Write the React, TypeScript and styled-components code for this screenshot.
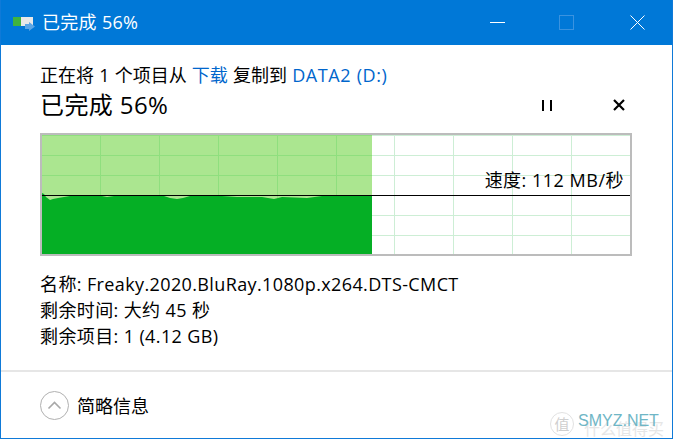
import { FC } from 'react';
import styled, { createGlobalStyle } from 'styled-components';

const FONT = '"Open Sans", "Noto Sans CJK SC", sans-serif';

const GlobalStyle = createGlobalStyle`
  html, body {
    margin: 0;
    padding: 0;
    background: #fff;
  }
`;

const Window = styled.div`
  position: relative;
  width: 673px;
  height: 439px;
  box-sizing: border-box;
  border-left: 1px solid #0f7ad8;
  border-right: 1px solid #0f7ad8;
  border-bottom: 1px solid #0f7ad8;
  display: flex;
  flex-direction: column;
  font-family: ${FONT};
  color: #000;
  overflow: hidden;
`;

const TitleBar = styled.div`
  height: 45px;
  margin: 0 -1px;
  flex: none;
  background: #0078d7;
  color: #fff;
  display: flex;
  align-items: center;
  padding: 0 13px 0 13px;
  font-size: 18px;
  line-height: 45px;
`;

const TitleText = styled.span`
  margin-left: 7px;
  flex: 1;
  letter-spacing: 0.3px;
  white-space: pre;
`;

const WinButton = styled.div<{ $gap: number }>`
  width: 46px;
  height: 45px;
  margin-left: ${(props) => props.$gap}px;
  display: flex;
  align-items: center;
  justify-content: center;
`;

const Body = styled.div`
  flex: 1;
  padding: 17px 40px 0 39px;
  display: flex;
  flex-direction: column;
`;

const CopyLine = styled.div`
  font-size: 18px;
  line-height: 26px;
  height: 26px;
  word-spacing: 0.5px;
  white-space: pre;
`;

const Link = styled.span<{ $latin?: boolean }>`
  color: #0066cc;
  letter-spacing: ${(props) => (props.$latin ? '0.55px' : '0')};
`;

const StatusRow = styled.div`
  display: flex;
  align-items: center;
  height: 34px;
  margin-bottom: 11px;
`;

const StatusText = styled.div`
  flex: 1;
  font-size: 24px;
  line-height: 34px;
  letter-spacing: 0.4px;
  white-space: pre;
`;

const ControlButton = styled.div<{ $gap: number }>`
  width: 14px;
  height: 14px;
  margin-right: ${(props) => props.$gap}px;
  display: flex;
  align-items: center;
  justify-content: center;
`;

const Chart = styled.div`
  position: relative;
  width: 592px;
  height: 123px;
  box-sizing: border-box;
  border: 2px solid #bcbcbc;
  background-color: #fff;
  background-image:
    linear-gradient(to right, #cdeed5 1px, transparent 1px),
    linear-gradient(to bottom, #cdeed5 1px, transparent 1px);
  background-size: 59px 100%, 100% 20px;
  background-position: 57px 0, 0 0;
  overflow: hidden;
`;

const Transferred = styled.div`
  position: absolute;
  left: 0;
  top: 0;
  bottom: 0;
  background-color: #abe690;
  background-image:
    linear-gradient(to right, #8fdf7e 1px, transparent 1px),
    linear-gradient(to bottom, #8fdf7e 1px, transparent 1px);
  background-size: 59px 100%, 100% 20px;
  background-position: 58px 0, 0 0;
`;

const Wave = styled.svg`
  position: absolute;
  left: 0;
  top: 0;
  display: block;
`;

const SpeedLine = styled.div`
  position: absolute;
  left: 0;
  right: 0;
  top: 60px;
  height: 1px;
  background: #000;
`;

const SpeedLabel = styled.div`
  position: absolute;
  right: 6px;
  top: 32px;
  font-size: 18px;
  line-height: 26px;
  letter-spacing: 0.5px;
  white-space: pre;
`;

const Details = styled.div`
  margin-top: 15px;
  display: flex;
  flex-direction: column;
`;

const DetailRow = styled.div`
  font-size: 18px;
  line-height: 26px;
  height: 26px;
  letter-spacing: 0.38px;
  white-space: pre;
`;

const Footer = styled.div`
  height: 68px;
  flex: none;
  border-top: 2px solid #e6e6e6;
  display: flex;
  align-items: center;
  padding-left: 39px;
  box-sizing: border-box;
  gap: 8px;
  font-size: 18px;
`;

const Watermark = styled.div`
  position: absolute;
  left: 549px;
  top: 411px;
  width: 122px;
  height: 27px;
  font-family: "Liberation Sans", sans-serif;
`;

const WatermarkCn = styled.span`
  position: absolute;
  left: 34px;
  top: 7px;
  font-family: "Noto Sans CJK SC", sans-serif;
  font-size: 16px;
  line-height: 20px;
  color: #e6e6e6;
  white-space: nowrap;
`;

const WatermarkBadge = styled.span`
  position: absolute;
  left: 0;
  top: 1px;
  width: 22px;
  height: 22px;
  border-radius: 50%;
  border: 1px solid #e2e2e2;
  color: #cfcfcf;
  font-family: "Noto Sans CJK SC", sans-serif;
  font-size: 15px;
  line-height: 22px;
  text-align: center;
`;

const WatermarkEn = styled.span`
  position: absolute;
  left: 28px;
  top: 0;
  font-size: 16px;
  line-height: 20px;
  color: #6fb6c6;
  white-space: nowrap;
`;

const CopyIcon: FC = () => (
  <svg width="22" height="16" viewBox="0 0 22 16" style={{ flex: 'none' }}>
    <rect x="0" y="2" width="20" height="9" fill="#e8e8e8" />
    <rect x="0" y="2" width="8" height="9" fill="#3fb33f" />
    <path d="M12 9h4V7l6 4.5L16 16v-2h-4z" fill="#5ba6e6" />
  </svg>
);

// 전송 속도 곡선
const wave =
  'M0 58 L2 59 L4 62 L8 65 L11 64 L16 63 L22 62 L28 61 L60 61 L65 62 L72 61 L122 61 L128 63 L135 64 L141 63 L148 61 L180 61 L195 62 L220 62 L232 64 L240 62 L265 63 L280 61 L330 61 L330 119 L0 119 Z';

const App: FC = () => {
  return (
    <Window>
      <GlobalStyle />
      <TitleBar>
        <CopyIcon />
        <TitleText>已完成 56%</TitleText>
        <WinButton $gap={0}>
          <svg width="15" height="1" viewBox="0 0 15 1">
            <rect width="15" height="1" fill="#fff" />
          </svg>
        </WinButton>
        <WinButton $gap={23}>
          <svg width="15" height="15" viewBox="0 0 15 15">
            <rect x="0.5" y="0.5" width="14" height="14" fill="none" stroke="#3a93e0" />
          </svg>
        </WinButton>
        <WinButton $gap={25}>
          <svg width="15" height="15" viewBox="0 0 15 15">
            <path d="M0.5 0.5L14.5 14.5M14.5 0.5L0.5 14.5" stroke="#fff" strokeWidth="1" fill="none" />
          </svg>
        </WinButton>
      </TitleBar>
      <Body>
        <CopyLine>
          正在将 1 个项目从 <Link>下载</Link> 复制到 <Link $latin>DATA2 (D:)</Link>
        </CopyLine>
        <StatusRow>
          <StatusText>已完成 56%</StatusText>
          <ControlButton $gap={58}>
            <svg width="10" height="11" viewBox="0 0 10 11">
              <rect x="0" y="0" width="2" height="11" fill="#000" />
              <rect x="8" y="0" width="2" height="11" fill="#000" />
            </svg>
          </ControlButton>
          <ControlButton $gap={6}>
            <svg width="12" height="12" viewBox="0 0 12 12">
              <path d="M1 1L11 11M11 1L1 11" stroke="#000" strokeWidth="2.2" fill="none" />
            </svg>
          </ControlButton>
        </StatusRow>
        <Chart>
          <Transferred style={{ width: 330 }} />
          <Wave width="330" height="119" viewBox="0 0 330 119">
            <path d={wave} fill="#05af25" />
          </Wave>
          <SpeedLine />
          <SpeedLabel>速度: 112 MB/秒</SpeedLabel>
        </Chart>
        <Details>
          <DetailRow>名称: Freaky.2020.BluRay.1080p.x264.DTS-CMCT</DetailRow>
          <DetailRow>剩余时间: 大约 45 秒</DetailRow>
          <DetailRow>剩余项目: 1 (4.12 GB)</DetailRow>
        </Details>
      </Body>
      <Footer>
        <svg width="29" height="29" viewBox="0 0 29 29">
          <circle cx="14.5" cy="14.5" r="14" fill="none" stroke="#b0b0b0" />
          <path d="M8.5 17.5L14.5 11.5L20.5 17.5" fill="none" stroke="#a8a8a8" strokeWidth="1.6" />
        </svg>
        简略信息
      </Footer>
      <Watermark>
        <WatermarkBadge>值</WatermarkBadge>
        <WatermarkCn>什么值得买</WatermarkCn>
        <WatermarkEn>SMYZ.NET</WatermarkEn>
      </Watermark>
    </Window>
  );
};

export default App;
